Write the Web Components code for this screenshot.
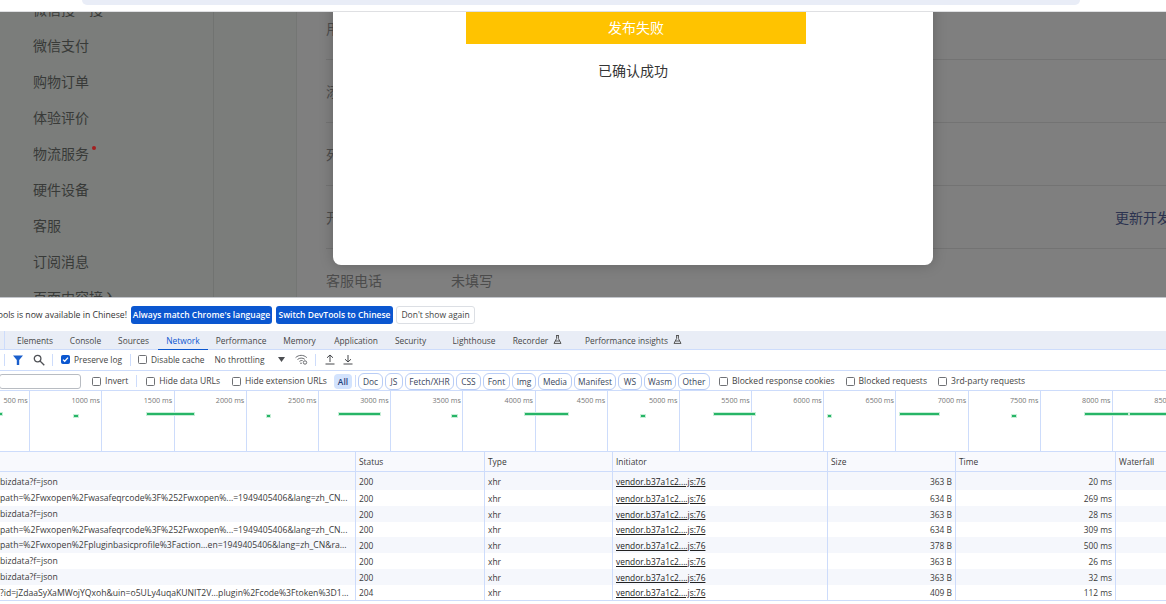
<!DOCTYPE html>
<html lang="en">
<head>
<meta charset="utf-8">
<title>DevTools</title>
<style>
  html, body { margin: 0; height: 604px; overflow: hidden; background: #fff; }
  body { font-family: "Open Sans", "Noto Sans CJK SC", sans-serif; }
</style>
</head>
<body>
<browser-strip></browser-strip>
<wx-page>
  <wx-menu-item>微信搜一搜</wx-menu-item>
  <wx-menu-item>微信支付</wx-menu-item>
  <wx-menu-item>购物订单</wx-menu-item>
  <wx-menu-item>体验评价</wx-menu-item>
  <wx-menu-item dot>物流服务</wx-menu-item>
  <wx-menu-item>硬件设备</wx-menu-item>
  <wx-menu-item>客服</wx-menu-item>
  <wx-menu-item>订阅消息</wx-menu-item>
  <wx-menu-item>页面内容接入</wx-menu-item>
</wx-page>
<lang-bar></lang-bar>
<tab-bar></tab-bar>
<net-toolbar></net-toolbar>
<filter-bar></filter-bar>
<net-overview></net-overview>
<request-table></request-table>

<script>
// top of the browser window, only the bottom of the address bar shows
class BrowserStrip extends HTMLElement {
  constructor() {
    super();
    this.attachShadow({ mode: "open" });
    this.shadowRoot.innerHTML = `
      <style>
        :host { display: block; height: 11px; background: #fff; border-bottom: 1px solid #dfe0e3; }
        .omnibox { margin-left: 82px; width: 998px; height: 5px; background: #e9edf7; border-radius: 0 0 9px 9px; }
      </style>
      <div class="omnibox"></div>
    `;
  }
}
customElements.define("browser-strip", BrowserStrip);

class WxMenuItem extends HTMLElement {
  constructor() {
    super();
    this.attachShadow({ mode: "open" });
    this.shadowRoot.innerHTML = `
      <style>
        :host { display: flex; height: 36px; flex: none; align-items: center; font-size: 14px; color: #383a38; }
        .dot { display: none; width: 4px; height: 4px; border-radius: 50%; background: #a31f1f; margin: -11px 0 0 3px; }
        :host([dot]) .dot { display: block; }
      </style>
      <slot></slot><span class="dot"></span>
    `;
  }
}
customElements.define("wx-menu-item", WxMenuItem);

// dimmed wechat page with the publish dialog over it
class WxPage extends HTMLElement {
  constructor() {
    super();
    this.attachShadow({ mode: "open" });
    this.shadowRoot.innerHTML = `
      <style>
        :host { display: flex; position: relative; height: 285px; overflow: hidden; background: #7f7f7f;
          border-bottom: 1px solid #c3c6cc; box-sizing: content-box;
          font-family: "Noto Sans CJK SC", sans-serif; }
        .menu { width: 180px; padding-left: 33px; margin-top: -21px; background: #7b7d7b; border-right: 1px solid #717371;
          display: flex; flex-direction: column; }
        .gap { width: 82px; background: #7b7d7b; border-right: 1px solid #747674; }
        .main { flex: 1; display: flex; flex-direction: column; margin-top: -15px; padding-left: 29px; color: #4c4c4c; font-size: 14px; min-width: 0; }
        .row { height: 62px; flex: none; display: flex; align-items: center; border-bottom: 1px solid #737373; }
        .row.last { border: 0; }
        .row span + span { margin-left: 69px; }
        .row .link { margin-left: auto; margin-right: -19px; flex: none; color: #2c3350; white-space: nowrap; }
        .dialog { position: absolute; left: 333px; top: -20px; width: 600px; height: 273px; background: #fff;
          border-radius: 8px; box-shadow: 0 0 14px rgba(0,0,0,.22); display: flex; flex-direction: column; align-items: center; padding-top: 20px; box-sizing: border-box; }
        .result { width: 340px; height: 32px; flex: none; margin-left: 6px; padding-bottom: 2px; box-sizing: border-box; background: #ffc300; color: #fff; font-size: 14px;
          display: flex; align-items: center; justify-content: center; }
        .note { margin: 16px 0 0 0; font-size: 14px; line-height: 20px; color: #353535; }
      </style>
      <div class="menu"><slot></slot></div>
      <div class="gap"></div>
      <div class="main">
        <div class="row"><span>用户</span></div>
        <div class="row"><span>添加</span></div>
        <div class="row"><span>死亡</span></div>
        <div class="row"><span>开发</span><span class="link">更新开发者</span></div>
        <div class="row last"><span>客服电话</span><span>未填写</span></div>
      </div>
      <div class="dialog">
        <div class="result">发布失败</div>
        <div class="note">已确认成功</div>
      </div>
    `;
  }
}
customElements.define("wx-page", WxPage);

class LangBar extends HTMLElement {
  constructor() {
    super();
    this.attachShadow({ mode: "open" });
    this.shadowRoot.innerHTML = `
      <style>
        :host { display: flex; align-items: center; height: 33px; background: #fff; font-size: 8.500px; color: #333; box-sizing: border-box; }
        .msg { width: 127px; overflow: hidden; display: flex; justify-content: flex-end; white-space: nowrap; font-size: 8.700px; }
        .msg span { flex: none; }
        .btn { height: 18px; margin-left: 4px; box-sizing: border-box; border-radius: 3px; background: #0b57d0; color: #fff; font-weight: 600;
          display: flex; align-items: center; justify-content: center; }
        .plain { background: #fff; color: #444; border: 1px solid #dcdfe4; font-weight: 400; }
      </style>
      <div class="msg"><span>DevTools is now available in Chinese!</span></div>
      <div class="btn" style="width:141px">Always match Chrome's language</div>
      <div class="btn" style="width:117px">Switch DevTools to Chinese</div>
      <div class="btn plain" style="width:79px;margin-left:3px">Don't show again</div>
    `;
  }
}
customElements.define("lang-bar", LangBar);

const FLASK = `<svg width="9" height="9" viewBox="0 0 9 9" fill="none" stroke="#555" stroke-width="1"><path d="M3 .5h3M3.6.5v3L1 8.4h7L5.4 3.500V.5M2.300 6h4.400"/></svg>`;

class TabBar extends HTMLElement {
  constructor() {
    super();
    this.attachShadow({ mode: "open" });
    const tabs = [
      ["Elements", 17, 36], ["Console", 70, 31], ["Sources", 118, 31], ["Network", 166, 34],
      ["Performance", 216, 50], ["Memory", 283, 33], ["Application", 334, 44], ["Security", 395, 31],
      ["Lighthouse", 452, 44], ["Recorder", 513, 35, 1], ["Performance insights", 585, 83, 1],
    ];
    let x = 5;
    const html = tabs.map(([name, left, w, flask]) => {
      const gap = left - x;
      x = left + w;
      return `<div class="tab ${name === "Network" ? "on" : ""}" style="margin-left:${gap}px;width:${w}px"><span>${name}</span>${flask ? `<i>${FLASK}</i>` : ""}</div>`;
    }).join("");
    this.shadowRoot.innerHTML = `
      <style>
        :host { display: flex; height: 19px; background: #e9edf6; border-bottom: 1px solid #cddcfb; box-sizing: border-box; font-size: 8.400px; color: #474747; }
        .sep { width: 1px; margin-left: 4px; background: #cddcfb; flex: none; }
        .tab { position: relative; display: flex; align-items: center; justify-content: center; white-space: nowrap; flex: none; padding-top: 1px; box-sizing: border-box; }
        .tab i { position: absolute; left: 100%; margin-left: 5px; top: 4px; display: block; height: 9px; }
        .on { color: #0b57d0; }
        .on::after { content: ""; position: absolute; left: -8px; right: -8px; bottom: -1px; height: 1px; background: #0b57d0; }
      </style>
      <div class="sep"></div>
      ${html}
    `;
  }
}
customElements.define("tab-bar", TabBar);

class NetCheck extends HTMLElement {
  constructor() {
    super();
    this.attachShadow({ mode: "open" });
    this.shadowRoot.innerHTML = `
      <style>
        :host { display: inline-flex; align-items: center; flex: none; white-space: nowrap; font-size: var(--check-size, 8.400px); color: #444; }
        .box { width: 9px; height: 9px; box-sizing: border-box; border: 1px solid #6f7175; border-radius: 1.5px; margin-right: 4px; flex: none; background: #fff; display: block; }
        :host([checked]) .box { background: #0b57d0; border-color: #0b57d0; }
        :host(:not([checked])) svg { display: none; }
      </style>
      <span class="box"><svg width="7" height="7" viewBox="0 0 7 7" style="display:block"><path d="M1 3.600l1.700 1.700L6 1.600" fill="none" stroke="#fff" stroke-width="1.300"/></svg></span>
      <slot></slot>
    `;
  }
}
customElements.define("net-check", NetCheck);

class NetToolbar extends HTMLElement {
  constructor() {
    super();
    this.attachShadow({ mode: "open" });
    this.shadowRoot.innerHTML = `
      <style>
        :host { display: flex; align-items: center; height: 21px; background: #fff; border-bottom: 1px solid #cddcfb; box-sizing: border-box; font-size: 8.400px; color: #444; padding-bottom: 1px; }
        .div { width: 1px; height: 12px; background: #cddcfb; flex: none; }
        svg { display: block; flex: none; }
        span { white-space: nowrap; flex: none; }
      </style>
      <div class="div" style="margin-left:4px"></div>
      <svg style="margin-left:8px" width="10" height="10" viewBox="0 0 10 10"><path d="M0 .5h10L6.200 5v5H3.800V5z" fill="#1a5fcc"/></svg>
      <svg style="margin-left:10px" width="12" height="12" viewBox="0 0 12 12" fill="none" stroke="#505257" stroke-width="1.300"><circle cx="4.600" cy="4.600" r="3.300"/><path d="M7 7l4.300 4.300"/></svg>
      <div class="div" style="margin-left:7px"></div>
      <net-check checked style="margin-left:8px">Preserve log</net-check>
      <div class="div" style="margin-left:8px"></div>
      <net-check style="margin-left:7px">Disable cache</net-check>
      <span style="margin-left:10px;width:63px">No throttling</span>
      <svg width="7" height="5" viewBox="0 0 7 5"><path d="M0 0h7L3.500 5z" fill="#4c4e52"/></svg>
      <svg style="margin-left:10px" width="13" height="11" viewBox="0 0 13 11" fill="none" stroke="#6a6c70" stroke-width="1"><path d="M.6 3.600C3.800.6 8.500.6 11.800 3.600M2.500 5.500c2-1.800 5.200-1.900 7.300-.2M4.400 7.400c1-.8 2.200-1 3.200-.8"/><circle cx="6" cy="9.300" r=".8" fill="#6a6c70" stroke="none"/><circle cx="10" cy="8.500" r="1.700"/></svg>
      <div class="div" style="margin-left:7px"></div>
      <svg style="margin-left:9px" width="10" height="11" viewBox="0 0 10 11" fill="none" stroke="#44464a" stroke-width="1"><path d="M5 8V1M2 3.800L5 1l3 2.800M.5 10h9"/></svg>
      <svg style="margin-left:8px" width="10" height="11" viewBox="0 0 10 11" fill="none" stroke="#44464a" stroke-width="1"><path d="M5 1v7M2 5.200L5 8l3-2.800M.5 10h9"/></svg>
    `;
  }
}
customElements.define("net-toolbar", NetToolbar);

class FilterBar extends HTMLElement {
  constructor() {
    super();
    this.attachShadow({ mode: "open" });
    const pills = [["Doc", 25], ["JS", 18], ["Fetch/XHR", 49], ["CSS", 25], ["Font", 27], ["Img", 24], ["Media", 34], ["Manifest", 42], ["WS", 24], ["Wasm", 32], ["Other", 32]];
    this.shadowRoot.innerHTML = `
      <style>
        :host { --check-size: 8.550px; display: flex; align-items: center; height: 19px; background: #fff; box-sizing: border-box; font-size: 8.400px; color: #444; padding-top: 1px; }
        .search { width: 82px; height: 15px; margin-left: -1px; box-sizing: border-box; border: 1px solid #b8bcc2; border-radius: 3px; flex: none; }
        .div { width: 1px; height: 12px; background: #cddcfb; flex: none; }
        .all { width: 18px; height: 15px; border-radius: 4px; background: #d3e3fd; color: #1f3f7a; display: flex; align-items: center; justify-content: center; flex: none; font-weight: 600; }
        .pills { display: flex; gap: 2px; margin-left: 2px; flex: none; }
        .pill { height: 17px; box-sizing: border-box; border: 1px solid #b9cdf6; border-radius: 6px; display: flex; align-items: center; justify-content: center; color: #38455c; flex: none; }
      </style>
      <div class="search"></div>
      <net-check style="margin-left:11px">Invert</net-check>
      <div class="div" style="margin-left:8px"></div>
      <net-check style="margin-left:9px">Hide data URLs</net-check>
      <net-check style="margin-left:12px">Hide extension URLs</net-check>
      <div class="all" style="margin-left:7px">All</div>
      <div class="div" style="margin-left:3px"></div>
      <div class="pills">${pills.map(([n, w]) => `<div class="pill" style="width:${w}px">${n}</div>`).join("")}</div>
      <net-check style="margin-left:9px">Blocked response cookies</net-check>
      <net-check style="margin-left:11px">Blocked requests</net-check>
      <net-check style="margin-left:11px">3rd-party requests</net-check>
    `;
  }
}
customElements.define("filter-bar", FilterBar);

// timeline: tick columns in flow, request bars sit over them at their own time
class NetOverview extends HTMLElement {
  constructor() {
    super();
    this.attachShadow({ mode: "open" });
    let ticks = "";
    for (let t = 500; t <= 8500; t += 500) ticks += `<div class="tick"><span>${t} ms</span></div>`;
    const bars = [[0, 413, 2], [74, 415, 4], [147, 413, 47], [267, 415, 3], [339, 413, 41], [452, 415, 5], [525, 413, 43], [641, 415, 4],
      [714, 413, 41], [828, 415, 3], [900, 413, 39], [1012, 415, 4], [1085, 413, 43], [1130, 413, 36]];
    this.shadowRoot.innerHTML = `
      <style>
        :host { display: block; position: relative; height: 62px; overflow: hidden; background: #fff; border-top: 1px solid #cddcfb; border-bottom: 1px solid #cddcfb; box-sizing: border-box; }
        .ticks { display: flex; margin-left: -42px; height: 100%; }
        .tick { width: 72.200px; flex: none; box-sizing: border-box; border-right: 1px solid #cddcfb; text-align: right; padding: 3.500px 1.500px 0 0; font-size: 7.200px; line-height: 11px; color: #777; white-space: nowrap; }
        .bar { position: absolute; height: 2px; background: #27b567; box-shadow: 0 0 0 1px #c9eed8; }
      </style>
      <div class="ticks">${ticks}</div>
      ${bars.map(([x, y, w]) => `<div class="bar" style="left:${x}px;top:${y - 391}px;width:${w}px"></div>`).join("")}
    `;
  }
}
customElements.define("net-overview", NetOverview);

class RequestTable extends HTMLElement {
  constructor() {
    super();
    this.attachShadow({ mode: "open" });
    const rows = [
      ["bizdata?f=json", 200, "363 B", "20 ms"],
      ["path=%2Fwxopen%2Fwasafeqrcode%3F%252Fwxopen%...=1949405406&lang=zh_CN...", 200, "634 B", "269 ms"],
      ["bizdata?f=json", 200, "363 B", "28 ms"],
      ["path=%2Fwxopen%2Fwasafeqrcode%3F%252Fwxopen%...=1949405406&lang=zh_CN...", 200, "634 B", "309 ms"],
      ["path=%2Fwxopen%2Fpluginbasicprofile%3Faction...en=1949405406&lang=zh_CN&ra...", 200, "378 B", "500 ms"],
      ["bizdata?f=json", 200, "363 B", "26 ms"],
      ["bizdata?f=json", 200, "363 B", "32 ms"],
      ["?id=jZdaaSyXaMWojYQxoh&uin=o5ULy4uqaKUNIT2V...plugin%2Fcode%3Ftoken%3D1...", 204, "409 B", "112 ms"],
    ];
    this.shadowRoot.innerHTML = `
      <style>
        :host { display: block; font-size: 8.400px; color: #3a3a3a; }
        .row { display: grid; grid-template-columns: 356px 129px 128px 215px 128px 160px 1fr; height: 16px; align-items: stretch; }
        .row > div { border-right: 1px solid #cddcfb; padding: 0 3px; display: flex; align-items: center; white-space: nowrap; overflow: hidden; box-sizing: border-box; min-width: 0; }
        .row > div:first-child { padding-left: 0; font-size: 8.650px; }
        .row > div:last-child { border: 0; }
        .head { height: 20px; background: #f8f9fd; border-bottom: 1px solid #cddcfb; box-sizing: border-box; }
        .body .row:nth-child(odd) { background: #f5f7fc; }
        .body .row:first-child { height: 18px; }
        .body .row:first-child > div { padding-top: 1px; }
        .body .row:nth-child(4) { height: 15px; }
        .body .row:last-child { height: 15px; border-bottom: 1px solid #cddcfb; box-sizing: content-box; }
        .num { justify-content: flex-end; }
        u { color: #222; }
      </style>
      <div class="row head"><div></div><div>Status</div><div>Type</div><div>Initiator</div><div>Size</div><div>Time</div><div>Waterfall</div></div>
      <div class="body">
        ${rows.map(r => `<div class="row"><div>${r[0]}</div><div>${r[1]}</div><div>xhr</div><div><u>vendor.b37a1c2....js:76</u></div><div class="num">${r[2]}</div><div class="num">${r[3]}</div><div></div></div>`).join("")}
      </div>
    `;
  }
}
customElements.define("request-table", RequestTable);
</script>
</body>
</html>
